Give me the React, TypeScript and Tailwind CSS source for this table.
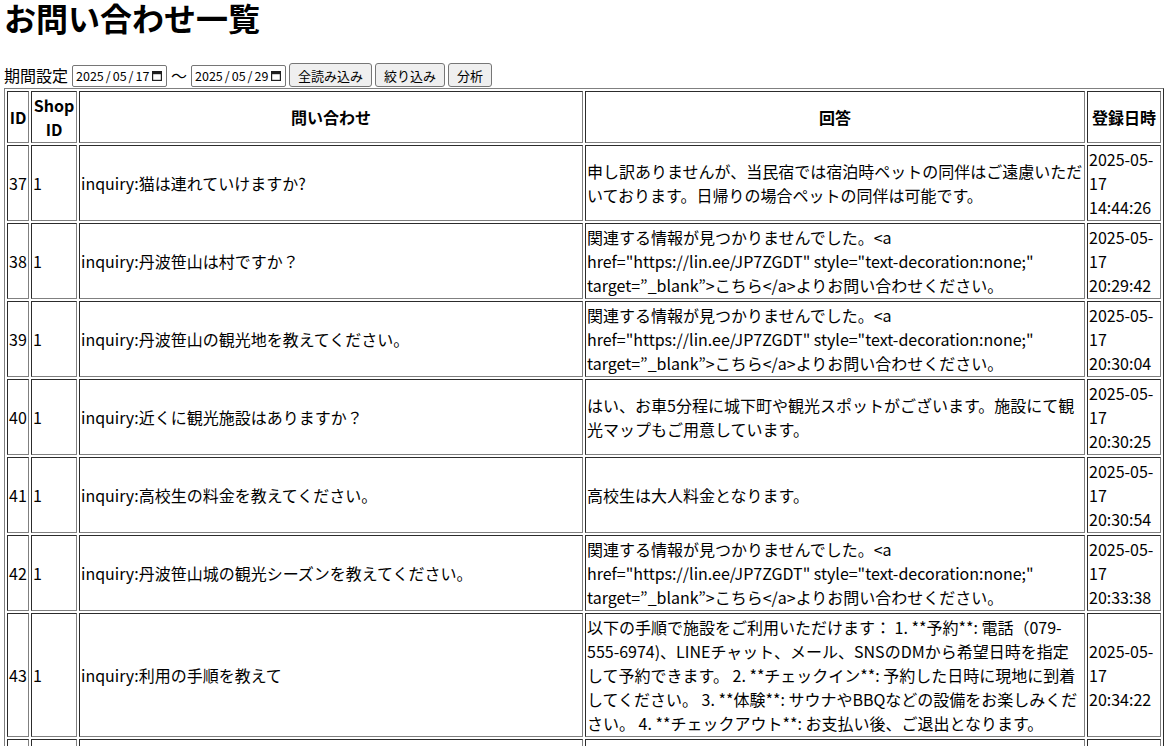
import React from 'react';

type Inquiry = {
  id: number;
  shopId: number;
  question: string;
  answer: string;
  createdAt: string;
};

const NOT_FOUND =
  '関連する情報が見つかりませんでした。<a href="https://lin.ee/JP7ZGDT" style="text-decoration:none;" target=”_blank”>こちら</a>よりお問い合わせください。';

const ROWS: Inquiry[] = [
  {
    id: 37,
    shopId: 1,
    question: 'inquiry:猫は連れていけますか?',
    answer: '申し訳ありませんが、当民宿では宿泊時ペットの同伴はご遠慮いただいております。日帰りの場合ペットの同伴は可能です。',
    createdAt: '2025-05-17 14:44:26',
  },
  { id: 38, shopId: 1, question: 'inquiry:丹波笹山は村ですか？', answer: NOT_FOUND, createdAt: '2025-05-17 20:29:42' },
  { id: 39, shopId: 1, question: 'inquiry:丹波笹山の観光地を教えてください。', answer: NOT_FOUND, createdAt: '2025-05-17 20:30:04' },
  {
    id: 40,
    shopId: 1,
    question: 'inquiry:近くに観光施設はありますか？',
    answer: 'はい、お車5分程に城下町や観光スポットがございます。施設にて観光マップもご用意しています。',
    createdAt: '2025-05-17 20:30:25',
  },
  { id: 41, shopId: 1, question: 'inquiry:高校生の料金を教えてください。', answer: '高校生は大人料金となります。', createdAt: '2025-05-17 20:30:54' },
  { id: 42, shopId: 1, question: 'inquiry:丹波笹山城の観光シーズンを教えてください。', answer: NOT_FOUND, createdAt: '2025-05-17 20:33:38' },
  {
    id: 43,
    shopId: 1,
    question: 'inquiry:利用の手順を教えて',
    answer:
      '以下の手順で施設をご利用いただけます： 1. **予約**: 電話（079-555-6974)、LINEチャット、メール、SNSのDMから希望日時を指定して予約できます。 2. **チェックイン**: 予約した日時に現地に到着してください。 3. **体験**: サウナやBBQなどの設備をお楽しみください。 4. **チェックアウト**: お支払い後、ご退出となります。',
    createdAt: '2025-05-17 20:34:22',
  },
  { id: 44, shopId: 1, question: 'inquiry:駐車場はありますか？', answer: 'はい、無料の駐車場をご用意しております。', createdAt: '2025-05-17 20:35:10' },
];

function CalendarIcon() {
  return (
    <svg width="10" height="10" viewBox="0 0 10 10" className="shrink-0">
      <rect x="0.6" y="0.6" width="8.8" height="8.8" fill="none" stroke="#1f1f1f" strokeWidth="1.2" />
      <rect x="0.6" y="0.6" width="8.8" height="2.6" fill="#1f1f1f" />
    </svg>
  );
}

function DateBox({ value }: { value: string }) {
  const [y, m, d] = value.split('/');
  return (
    <div className="mt-[2px] flex h-[22px] w-[95px] items-center rounded-[2px] border border-[#767676] bg-white pl-[3px] pr-[4px] text-[12.5px] leading-none">
      <span>{y}</span>
      <span className="mx-[2px]">/</span>
      <span>{m}</span>
      <span className="mx-[2px]">/</span>
      <span>{d}</span>
      <span className="ml-auto">
        <CalendarIcon />
      </span>
    </div>
  );
}

function Btn({ children }: { children: React.ReactNode }) {
  return (
    <button className="h-[24px] rounded-[3px] border border-[#767676] bg-[#efefef] px-[8px] text-[13px] leading-none text-black">
      {children}
    </button>
  );
}

const cell = 'border border-[gray] [border-style:inset] p-[1px] align-middle';

export default function App() {
  return (
    <div className="min-h-screen bg-white px-[4px] font-['Noto_Sans_CJK_JP',sans-serif] text-[16px] text-black">
      <h1 className="m-0 h-[34px] text-[32px] leading-[34px] font-bold">お問い合わせ一覧</h1>

      <div className="mt-[29px] flex h-[25px] items-start">
        <span className="leading-[24px]">期間設定</span>
        <div className="ml-[4px]">
          <DateBox value="2025/05/17" />
        </div>
        <span className="mx-[4px] leading-[24px]">〜</span>
        <DateBox value="2025/05/29" />
        <div className="ml-[3px] flex gap-[3px]">
          <Btn>全読み込み</Btn>
          <Btn>絞り込み</Btn>
          <Btn>分析</Btn>
        </div>
      </div>

      <table className="w-full table-fixed border-separate border-spacing-[2px] border border-[gray] [border-style:outset] leading-[24px]">
        <thead>
          <tr>
            <th className={`${cell} w-[22px] text-center font-bold`}>ID</th>
            <th className={`${cell} w-[46px] text-center font-bold`}>Shop ID</th>
            <th className={`${cell} w-[504px] text-center font-bold`}>問い合わせ</th>
            <th className={`${cell} w-[500px] text-center font-bold`}>回答</th>
            <th className={`${cell} text-center font-bold`}>登録日時</th>
          </tr>
        </thead>
        <tbody>
          {ROWS.map((r) => (
            <tr key={r.id}>
              <td className={`${cell} whitespace-nowrap`}>{r.id}</td>
              <td className={cell}>{r.shopId}</td>
              <td className={cell}>{r.question}</td>
              <td className={`${cell} break-words`}>{r.answer}</td>
              <td className={cell}>{r.createdAt}</td>
            </tr>
          ))}
        </tbody>
      </table>
    </div>
  );
}
